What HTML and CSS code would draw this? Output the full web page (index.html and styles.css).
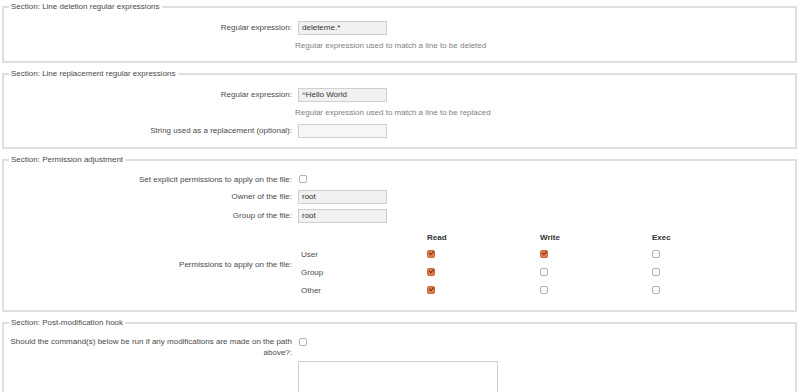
FILE: index.html
```html
<!DOCTYPE html>
<html>
<head>
<meta charset="utf-8">
<link rel="stylesheet" href="styles.css">
</head>
<body>
<fieldset class="section first">
  <legend>Section: Line deletion regular expressions</legend>
  <div class="row">
    <label class="lbl">Regular expression:</label>
    <div class="field"><input class="txt" type="text" value="deleteme.*"></div>
  </div>
  <div class="row help-row">
    <span></span>
    <div class="help">Regular expression used to match a line to be deleted</div>
  </div>
</fieldset>

<fieldset class="section">
  <legend>Section: Line replacement regular expressions</legend>
  <div class="row">
    <label class="lbl">Regular expression:</label>
    <div class="field"><input class="txt" type="text" value="^Hello World"></div>
  </div>
  <div class="row help-row">
    <span></span>
    <div class="help">Regular expression used to match a line to be replaced</div>
  </div>
  <div class="row">
    <label class="lbl">String used as a replacement (optional):</label>
    <div class="field"><input class="txt light" type="text" value=""></div>
  </div>
</fieldset>

<fieldset class="section perms-section">
  <legend>Section: Permission adjustment</legend>
  <div class="row check-row">
    <label class="lbl">Set explicit permissions to apply on the file:</label>
    <div class="field"><input class="cb" type="checkbox"></div>
  </div>
  <div class="row">
    <label class="lbl">Owner of the file:</label>
    <div class="field"><input class="txt" type="text" value="root"></div>
  </div>
  <div class="row">
    <label class="lbl">Group of the file:</label>
    <div class="field"><input class="txt" type="text" value="root"></div>
  </div>
  <div class="row perm-row">
    <label class="lbl">Permissions to apply on the file:</label>
    <div class="perm-grid">
      <span></span><span class="ph">Read</span><span class="ph">Write</span><span class="ph">Exec</span>
      <span class="who">User</span>
      <span class="pc"><input class="cb" type="checkbox" checked></span>
      <span class="pc"><input class="cb" type="checkbox" checked></span>
      <span class="pc"><input class="cb" type="checkbox"></span>
      <span class="who">Group</span>
      <span class="pc"><input class="cb" type="checkbox" checked></span>
      <span class="pc"><input class="cb" type="checkbox"></span>
      <span class="pc"><input class="cb" type="checkbox"></span>
      <span class="who">Other</span>
      <span class="pc"><input class="cb" type="checkbox" checked></span>
      <span class="pc"><input class="cb" type="checkbox"></span>
      <span class="pc"><input class="cb" type="checkbox"></span>
    </div>
  </div>
</fieldset>

<fieldset class="section">
  <legend>Section: Post-modification hook</legend>
  <div class="row top-row">
    <label class="lbl">Should the command(s) below be run if any modifications are made on the path above?:</label>
    <div class="field"><input class="cb" type="checkbox"></div>
  </div>
  <div class="row">
    <span></span>
    <div class="field"><textarea class="area"></textarea></div>
  </div>
</fieldset>
</body>
</html>
```

FILE: styles.css
```css
html, body {
  margin: 0;
  padding: 0;
  background: #ffffff;
}
body {
  font-family: "Liberation Sans", Arial, sans-serif;
  font-size: 8px;
  color: #4a4a4a;
  overflow: hidden;
}
.section {
  margin: 0 3px 6px 2px;
  padding: 6px 5px 7px 5px;
  border: 2px solid #e0e0da;
  min-width: 0;
}
.section.first {
  margin-top: 2px;
}
.section.perms-section {
  padding-bottom: 10px;
}
legend {
  padding: 0 2px;
  line-height: 10px;
  color: #4a4a4a;
}
.row {
  display: grid;
  grid-template-columns: 283px 1fr;
  column-gap: 6px;
  align-items: center;
  min-height: 19px;
}
.help-row {
  min-height: 17px;
}
.check-row {
  min-height: 16px;
}
.lbl {
  text-align: right;
  line-height: 11px;
  color: #4a4a4a;
}
.field {
  display: flex;
  align-items: center;
}
.help {
  margin-left: -3px;
  color: #808080;
}
.txt {
  box-sizing: border-box;
  width: 89px;
  height: 14px;
  margin: 0;
  padding: 0 3px;
  border: 1px solid #cfcfcf;
  background: #f1f1f1;
  font-family: "Liberation Sans", Arial, sans-serif;
  font-size: 8px;
  color: #333333;
  outline: none;
}
.txt.light {
  background: #f6f6f6;
}
.cb {
  appearance: none;
  -webkit-appearance: none;
  box-sizing: border-box;
  width: 8px;
  height: 8px;
  margin: 0 0 0 1px;
  border: 1px solid #b0b0b0;
  border-radius: 2px;
  background: #ffffff;
  position: relative;
}
.cb:checked {
  background: #e67a4b;
  border-color: #c8683c;
}
.cb:checked::after {
  content: "";
  position: absolute;
  left: 1px;
  top: 0px;
  width: 4px;
  height: 2px;
  border-left: 1px solid #6b3a22;
  border-bottom: 1px solid #6b3a22;
  transform: rotate(-45deg);
}
.perm-row {
  margin-top: 4px;
  margin-bottom: 1px;
}
.perm-grid {
  display: grid;
  grid-template-columns: 129px 113px 112px 112px;
  grid-auto-rows: 18px;
  grid-template-rows: 16px;
  align-items: center;
}
.ph {
  font-weight: bold;
  color: #333333;
}
.who {
  padding-left: 3px;
  color: #4a4a4a;
}
.pc {
  display: flex;
  align-items: center;
}
.pc .cb {
  margin-left: 0;
}
.top-row {
  align-items: start;
  padding: 2px 0;
}
.top-row .field {
  height: 11px;
}
.area {
  box-sizing: border-box;
  width: 200px;
  height: 60px;
  margin: 1px 0 0 0;
  border: 1px solid #cfcfcf;
  background: #ffffff;
  resize: none;
}
```
